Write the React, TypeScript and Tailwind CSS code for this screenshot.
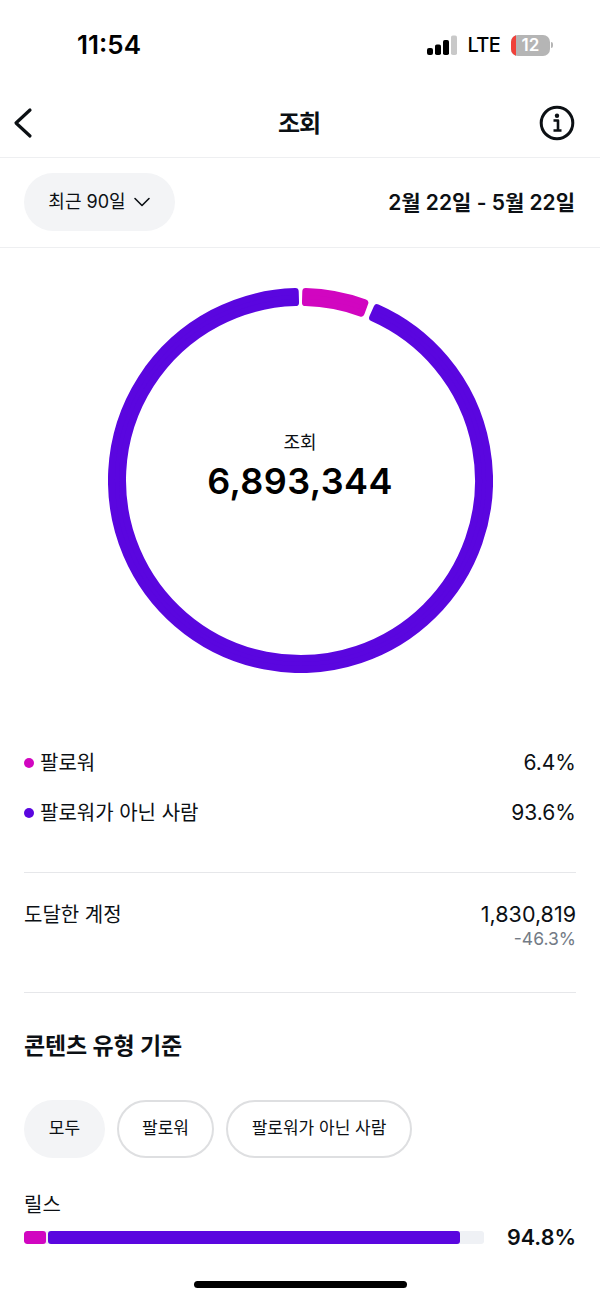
const FONT = "font-['Inter','Noto_Sans_CJK_KR','Noto_Sans',sans-serif]";

function sector(a1: number, a2: number) {
  const cx = 192.5, cy = 192.5, ro = 189, ri = 178;
  const pt = (r: number, a: number) => {
    const t = (a * Math.PI) / 180;
    return `${(cx + r * Math.sin(t)).toFixed(2)} ${(cy - r * Math.cos(t)).toFixed(2)}`;
  };
  const large = a2 - a1 > 180 ? 1 : 0;
  return `M${pt(ro, a1)} A${ro} ${ro} 0 ${large} 1 ${pt(ro, a2)} L${pt(ri, a2)} A${ri} ${ri} 0 ${large} 0 ${pt(ri, a1)} Z`;
}

function Donut() {
  return (
    <svg width="385" height="385" viewBox="0 0 385 385" className="absolute left-0 top-0">
      <path d={sector(23.9, 358.4)} fill="#5a06df" stroke="#5a06df" strokeWidth="7" strokeLinejoin="round" />
      <path d={sector(1.6, 19.9)} fill="#d106c0" stroke="#d106c0" strokeWidth="7" strokeLinejoin="round" />
    </svg>
  );
}

export default function App() {
  return (
    <div className={`${FONT} relative h-[1301px] w-[600px] overflow-hidden bg-white text-[#0c1014]`}>
      {/* status bar */}
      <div className="flex h-[88px] items-start justify-between pl-[77px] pr-[47px] pt-[27px]">
        <span className="text-[26px] font-semibold leading-[36px] text-black">11:54</span>
        <div className="flex items-center pt-[7px]">
          <svg width="30" height="20" viewBox="0 0 30 20" className="mr-[11px]">
            <rect x="0" y="13" width="6" height="7" rx="2" fill="#000" />
            <rect x="8" y="9.5" width="6" height="10.5" rx="1.8" fill="#000" />
            <rect x="16" y="5" width="6" height="15" rx="1.8" fill="#000" />
            <rect x="24" y="0.5" width="6" height="19.5" rx="1.8" fill="#c9c9c9" />
          </svg>
          <span className="text-[20px] font-medium leading-[22px] tracking-[-0.7px] text-black">LTE</span>
          <div className="relative ml-[11px] flex h-[21px] w-[39px] items-center justify-center overflow-hidden rounded-[7px] bg-[#b5b5b5]">
            <div className="absolute bottom-0 left-0 top-0 w-[5px] bg-[#f0413a]" />
            <span className="relative text-[17px] font-semibold leading-none text-white">12</span>
          </div>
          <div className="ml-[1px] h-[6px] w-[2px] rounded-r-sm bg-[#b5b5b5]" />
        </div>
      </div>

      {/* header */}
      <div className="flex h-[70px] items-center justify-between border-b border-[#eeeff1] pl-[12px] pr-[25px]">
        <div className="flex w-[36px] justify-start">
          <svg width="24" height="32" viewBox="0 0 24 32" fill="none" stroke="#0c1014" strokeWidth="3.2" strokeLinecap="round" strokeLinejoin="round">
            <path d="M18 3 L4 16 L18 29" />
          </svg>
        </div>
        <span className="pl-[11px] pt-[2px] text-[24px] font-semibold leading-[32px] tracking-[-1px]">조회</span>
        <svg width="36" height="36" viewBox="0 0 36 36" fill="none">
          <circle cx="18" cy="18" r="15.8" stroke="#0c1014" strokeWidth="3" />
          <circle cx="18" cy="10.8" r="2.2" fill="#0c1014" />
          <path d="M14.5 15.5 H19 V24.5 M14.5 25.5 H22.5" stroke="#0c1014" strokeWidth="2.6" strokeLinejoin="round" />
        </svg>
      </div>

      {/* range row */}
      <div className="flex h-[90px] items-center justify-between border-b border-[#eeeff1] pl-[24px] pr-[25px]">
        <div className="-mt-[2px] flex h-[58px] w-[151px] items-center justify-center gap-[7px] rounded-full bg-[#f3f4f6]">
          <span className="text-[18px] leading-[24px]">최근 90일</span>
          <svg width="18" height="12" viewBox="0 0 18 12" fill="none" stroke="#0c1014" strokeWidth="1.6" strokeLinecap="round" strokeLinejoin="round">
            <path d="M2 2.5 L9 9.5 L16 2.5" />
          </svg>
        </div>
        <span className="text-[21px] font-semibold leading-[28px]">2월 22일 - 5월 22일</span>
      </div>

      {/* donut */}
      <div className="flex justify-center pt-[40px]">
        <div className="relative flex h-[385px] w-[385px] flex-col items-center justify-center pb-[28px]">
          <Donut />
          <span className="text-[18px] leading-[24px]">조회</span>
          <span className="mt-[4px] text-[36px] font-semibold leading-[44px] tracking-[0.4px] text-black">6,893,344</span>
        </div>
      </div>

      {/* legend */}
      <div className="px-[24px] pt-[74px]">
        <div className="flex h-[32px] items-center justify-between">
          <div className="flex items-center gap-[6px]">
            <span className="h-[10px] w-[10px] rounded-full bg-[#d106c0]" />
            <span className="text-[20px] leading-[28px]">팔로워</span>
          </div>
          <span className="text-[21px] leading-[28px]">6.4%</span>
        </div>
        <div className="mt-[18px] flex h-[32px] items-center justify-between">
          <div className="flex items-center gap-[6px]">
            <span className="h-[10px] w-[10px] rounded-full bg-[#5a06df]" />
            <span className="text-[20px] leading-[28px]">팔로워가 아닌 사람</span>
          </div>
          <span className="text-[21px] leading-[28px]">93.6%</span>
        </div>

        <div className="mt-[43px] border-t border-[#e6e7ea]" />

        <div className="flex h-[120px] items-start justify-between border-b border-[#e6e7ea] pt-[28px]">
          <span className="text-[20px] leading-[28px]">도달한 계정</span>
          <div className="-mt-[1px] flex flex-col items-end">
            <span className="text-[21.5px] leading-[28px]">1,830,819</span>
            <span className="text-[17.5px] leading-[22px] text-[#737b86]">-46.3%</span>
          </div>
        </div>

        <div className="pt-[37px] text-[23px] font-semibold leading-[32px] tracking-[-0.2px]">콘텐츠 유형 기준</div>

        <div className="mt-[38px] flex gap-[12px]">
          <div className="flex h-[58px] w-[81px] items-center justify-center rounded-full bg-[#f3f4f6] text-[17px]">모두</div>
          <div className="flex h-[58px] w-[97px] items-center justify-center rounded-full border-2 border-[#dedfe1] text-[17px]">팔로워</div>
          <div className="flex h-[58px] w-[186px] items-center justify-center rounded-full border-2 border-[#dedfe1] text-[17px]">팔로워가 아닌 사람</div>
        </div>

        <div className="mt-[33px] text-[20px] leading-[28px]">릴스</div>
        <div className="mt-[4px] flex items-center justify-between">
          <div className="flex h-[13px] w-[460px] overflow-hidden rounded-[3px] bg-[#eff1f5]">
            <div className="h-full w-[22px] rounded-[3px] bg-[#d106c0]" />
            <div className="ml-[2px] h-full w-[412px] rounded-[3px] bg-[#5a06df]" />
          </div>
          <span className="text-[21.5px] font-semibold leading-[28px] text-[#0c1014]">94.8%</span>
        </div>
      </div>

      {/* home indicator */}
      <div className="absolute bottom-[13px] left-[194px] h-[7px] w-[213px] rounded-full bg-black" />
    </div>
  );
}
